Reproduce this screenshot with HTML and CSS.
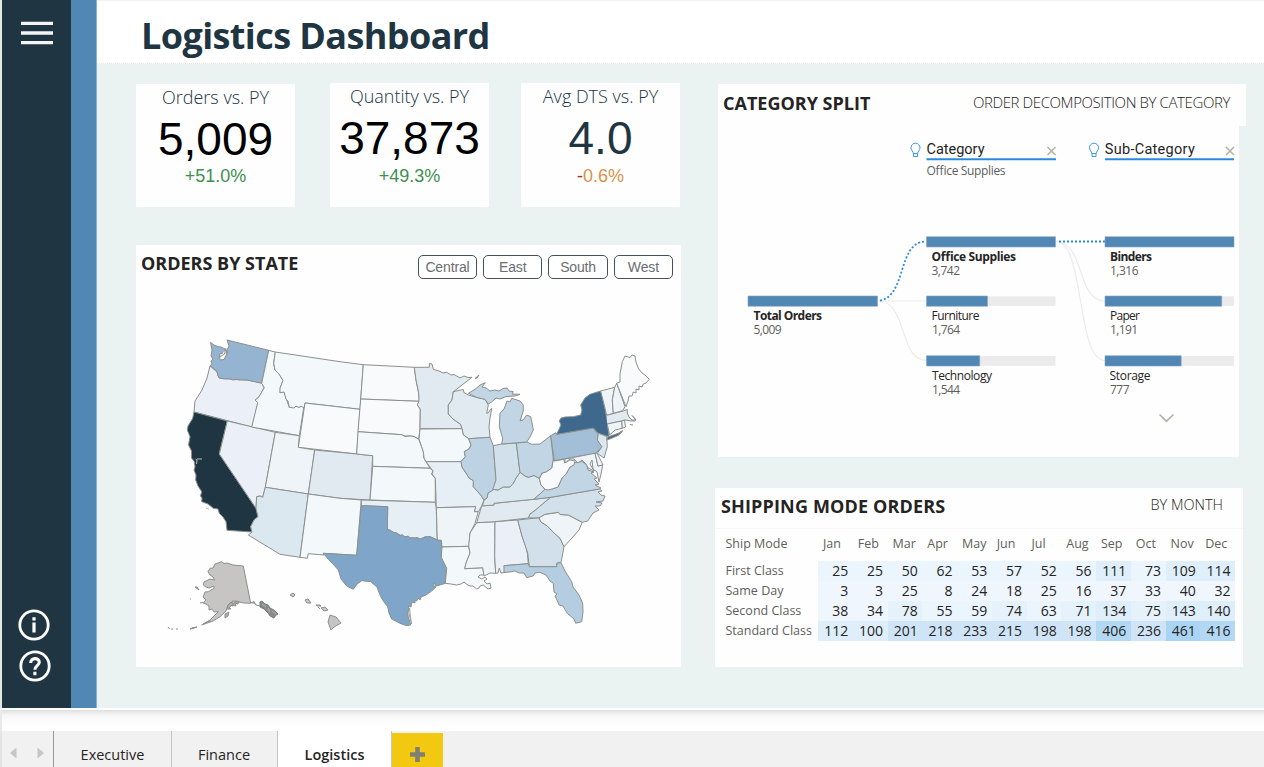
FILE: index.html
```html
<!DOCTYPE html>
<html lang="en">
<head>
<meta charset="utf-8">
<title>Logistics Dashboard</title>
<link rel="stylesheet" href="styles.css">
</head>
<body>
<div class="report">
  <nav class="rail">
    <svg class="menu" width="34" height="28" viewBox="0 0 34 28"><path d="M1 4.400h32M1 14h32M1 23.600h32" stroke="#f4f5f5" stroke-width="3.300"/></svg>
    <div class="rail-bottom">
      <svg class="info" width="34" height="34" viewBox="0 0 34 34"><circle cx="17" cy="17" r="14.200" fill="none" stroke="#fff" stroke-width="2.800"/><path d="M17 9.200v3.300M17 14.500v10" stroke="#fff" stroke-width="3.200"/></svg>
      <svg class="help" width="34" height="34" viewBox="0 0 34 34"><circle cx="17" cy="17" r="14.200" fill="none" stroke="#fff" stroke-width="2.800"/><path d="M12.700 14c0-5.800 8.600-5.600 8.600-.7 0 3.200-4.400 3.600-4.400 7.400M16.900 22.800v3.500" fill="none" stroke="#fff" stroke-width="3.100"/></svg>
    </div>
  </nav>
  <div class="stripe"></div>
  <main class="main">
    <header class="top"><h1>Logistics Dashboard</h1></header>
    <div class="content">
      <section class="left">
        <div class="kpis">
          <div class="kpi orders"><div class="kpi-name">Orders vs. PY</div><div class="kpi-value">5,009</div><div class="kpi-delta">+51.0%</div></div>
          <div class="kpi quantity"><div class="kpi-name">Quantity vs. PY</div><div class="kpi-value">37,873</div><div class="kpi-delta">+49.3%</div></div>
          <div class="kpi dts"><div class="kpi-name">Avg DTS vs. PY</div><div class="kpi-value">4.0</div><div class="kpi-delta"><span>-</span>0.6%</div></div>
        </div>
        <div class="panel map-panel">
          <div class="map-head">
            <h2>ORDERS BY STATE</h2>
            <div class="regions"><button>Central</button><button>East</button><button>South</button><button>West</button></div>
          </div>
          <svg class="map" width="545" height="372" viewBox="136 295 545 372">
            <g stroke="#8b908d" stroke-width="1" stroke-linejoin="round">
              <path fill="#ebeff8" d="M210 366L217 372L219 378L230 379L247 380L262 383L264 388L259 397L255 400L258 403L252 427L194 412L195 401L202 390L207 378Z"/>
              <path fill="#94b4d1" d="M227 340L268.700 350.300L261.700 383.300L256 382L247 380L240 380L236 379.500L233 380L230 378.700L224 379L219.300 377.700L218 376L217 371.700L214 369L212 367L210 365.700L212 364L211 361L213 359L211 356L212 350L210.500 342.300L214 345L218.300 346.700L221 347L225 349L224 353L222.700 354L219.300 355L220 360L224 359.500L225.700 356L227.500 353L227 350L229 346Z"/>
              <path fill="#fff" d="M226 348L224.500 354L220 357L219.500 354L223 353M224 351L227 350L226 354"/>
              <path fill="#203542" d="M194 412L227.300 421L219.300 454L223.300 460L256 508.300L258 516.700L254 520L250.700 526.700L252 532L227 530.300L226 521.700L223 517L219.300 513.300L218 509L213.300 508.300L208 504L201.700 501.700L202 498L200.500 496L201.700 491.700L198 486L195.700 480L196 475L194 470L195 466.700L194 461L191.500 458L191.500 451L188.500 445L190 436.700L187.300 430L188 426L192.700 418.300Z"/>
              <path fill="none" stroke="#b9c1c4" d="M195.500 459L197 460L196.500 464M197 459H202M206 508L209 509"/>
              <path fill="#ebeff8" d="M227.300 421L275.300 432.300L265.300 487.300L262.700 497.300L260 496L256.700 496.700L256 508.300L219.300 454Z"/>
              <path fill="#f3f8fb" d="M268.700 350.300L275.300 352L273.700 363.300L275 370L279 374L283 380.500L280.500 387L280 392.700L284 391.500L286 398L289.300 407.300L294 406L299 407L304 406L299.300 435.700L251.700 427L257.700 402.700L255.300 400.300L259 396.700L264.300 387.700L261.700 383.300Z"/>
              <path fill="#f3f8fb" d="M275.300 352L340 361.700L363.300 364.700L360 409.300L305 403L304 408L301 406L299 407.500L296 406L294 408L289.300 407.300L288 401L286 399L284 392L280 392.700L280 388L283 380.500L279 374L275 370L273.700 363.300Z"/>
              <path fill="#f8fafc" d="M305 403L360 409.300L356.700 454L298.300 447.300Z"/>
              <path fill="#eff4f8" d="M275.300 432.300L299.300 435.700L298.300 447.300L314.700 450L308.300 494L265.300 487.300Z"/>
              <path fill="#e0eaf0" d="M314.700 450L357 454L372.700 455.700L370 500L340 498.300L308.300 494Z"/>
              <path fill="#dce8f0" d="M265.300 487.300L308.300 494L300 557.300L280 554.300L248.300 535L252 532L250.700 526.700L254 520L258 516.700L256 508.300L256.700 496.700L260 496L262.700 497.300Z"/>
              <path fill="#f3f8fb" d="M308.300 494L340 498.300L361.300 500L356.700 555.300L323.300 553.300L324 555L308.300 553.700L307.300 558.300L300 557.300Z"/>
              <path fill="#f8fafc" d="M363.300 364.700L414.300 367.300L416 380L418.700 393.300L419.300 401.300L360.700 399Z"/>
              <path fill="#f8fafc" d="M360.700 399L419.300 401.300L417.300 405L420.300 409L420 429L418.700 439.300L414 436.500L410 436L405 436L401.700 434.700L358 431.700Z"/>
              <path fill="#f3f8fb" d="M358 431.700L401.700 434.700L405 436.500L410 436L414 436.500L418.700 439.300L421 445L423.300 451.700L424 458L426 461.700L430 468.300L372.700 466.300V455.700L356.700 454Z"/>
              <path fill="#f3f8fb" d="M372.700 466.300L430 468.300L433 471L431.500 474L435.300 478.300V502.300L370 500Z"/>
              <path fill="#e6eef6" d="M361.300 500L435.300 502.300L436.300 507.700L437.300 540L433 538L430 536.700L425 537L420 539L417 537.500L413 538L406.700 537.300L402 536L397 533.500L393 532L387.300 529.300L387.700 506.700L361.300 505.700Z"/>
              <path fill="#7fa6c8" d="M361.300 505.700L387.700 506.700L387.300 529.300L391 530.500L393 532.500L397 533L400 536L402 534.500L405 537L408 536L411 538.500L413 537.500L415 539L417 537.500L420 539.500L425 537L430 536.700L437.300 540L441.300 540.300L441.300 557.300L444 562L446.700 568.300L445.300 576L445.300 583.300L440 585L436 586L434 583L433 585L436 587L431.700 591L426 595L421 597L420 600L418 598L416.700 601L415 600L415 603L412 602L411 607L408.500 606L409 610L407.500 612L408.300 617L410.700 625L406 625.500L400 623.300L391.700 619L389 613L387.700 606.700L384 602L380.700 596.700L377 587L370.700 581.700L361.700 580.700L357 584L353.300 589.300L346.700 586L341 579L338.300 570L333 564L328.300 559.300L323.300 553.300L356.700 555.300Z"/>
              <path fill="#ddd" stroke-width=".7" d="M409.500 608L411.500 624L410 618L408.500 612Z"/>
              <path fill="#e0eaf0" d="M414.300 367.300H429.300V363.300L432 364L433.300 369.300L439 371L443 373L446.700 372.300L451 375L454 374.500L456.700 376L460 378L464 376L468 377.500L472 377.300L462 385L453.300 391.700L452 400L448.300 405V414L453 419L460.700 424.300L462 428.700H420L420.300 409L417.300 405L419 401L418.700 393L416 380Z"/>
              <path fill="#e0eaf0" d="M453.300 391.700L463.300 389.500L464 392.700L468.300 395L477 397.500L485 399.300L488.300 405L486.700 413.300L488 413L491.700 408.300L490 418L489 427L490 437.300L468.700 438.700L463.300 435L462 428.700L460.700 424.300L453 419L448.300 414V405L452 400Z"/>
              <path fill="#f3f8fb" d="M420 429L462 428.700L463.300 435L468.700 438.700L471 445L469 449L464.300 451.700L465.300 456.700L461 461.700H426L424 458L423.300 451.700L419 439Z"/>
              <path fill="#e6eef6" d="M426 461.700H461.500L462 467L466 473L469 478L473.500 480.700L473.300 486.700L480.700 495L484 500L481.700 506L478.300 511.700L474.300 511.700L475.700 506.700L436.300 507.700L435.300 478.300L432 474L433 471Z"/>
              <path fill="#eff4f8" d="M436.300 507.700L475.700 506.700L474.300 511.700L478.300 511.700L475 523.300L470 533.300L469 546.300L442 547L441.300 540.300L437.300 540Z"/>
              <path fill="#f3f8fb" d="M442 547L468.700 546.300L470 553.300L466 563.300L464.700 568.700L482.700 567.700L484 575L480 575L478 577L482 579L485 577L487 579L484 581L487 584L490 583L491 588L488 589L483.300 585L480 586L479 588L476.700 589L473 586L470 586L466.700 584.300L464 582L461 584L456.700 585L451 584L445.300 583.300L446.700 568.300L441.300 557.300Z"/>
              <path fill="#eff4f8" d="M476.700 522.700L495 521.700L494.700 556.700L495.700 573.300L490 573L484 576L482.700 567.700L464.700 568.700L466 563L470 553L468.700 546L470 533Z"/>
              <path fill="#ebeff8" d="M495 521.700L517.700 520L522 536L526 547L527.500 554L528.300 563.700L504 565.700L505.700 572.300L501 573L499.300 568L498 573L495.700 573.300L494.700 556.700Z"/>
              <path fill="#d1e0eb" d="M517.700 520L539 517.700L541 522L547.300 526L554 533L560 538.300L564 546.700L561 562.700L557 563L556.700 566.700H529.300L527.700 553L522 536Z"/>
              <path fill="#eff4f8" d="M539 517.700L545 514.300L558.300 512.300L560 514.500L568.300 515L582.300 522.300L579 530L572 538L564 546.700L560 538.300L554 533L547.300 526L541 522Z"/>
              <path fill="#d1e0eb" d="M528.300 518L530 514L536 509.500L540 506L546 501L550.700 497.300L599.300 489L602 491L598 492L601 495L605 496L603 501L596 502L602 503L600 506L595 506L599 510L593 513L587.700 521L582.300 522.300L568.300 515L560 514.500L558.300 512.300L545 514.300L539 517.700Z"/>
              <path fill="#e0eaf0" d="M476.700 522.700L481.700 505.700L494 505V503.300L533.700 499.300L550.700 497.300L546 501L540 506L536 509.500L530 514L528.300 518L495 521.700Z"/>
              <path fill="#dce8f0" d="M484 500L487 498L488 493L492.700 489.300L498 490L503.300 487L510 487L513.300 483.300L516 478L520 472.300L525 476L528.300 477.300L534 475.500L539.300 478.300L541 485L545 489.300L540 494L533.700 499.300L494 503.300V505L482.500 506Z"/>
              <path fill="#c2d5e4" d="M533.700 499.300L540 494L545 489.300L552 489L558 487L562 478L566 474L570 467L575 462.700L582 461.500L587 465L588 470L594 472L591 473L597 478L594 479L599 484L595 485L601 488L599.300 489L550.700 497.300Z"/>
              <path fill="#f8fafc" d="M539.300 478.300L542 473L546 472L551.700 468L553.500 458L554.300 461L564 459.300L564.500 463L570 460L575 461L574 465L570 467L566 474L562 478L558 487L552 489L548 490L545 489.300L541 485Z"/>
              <path fill="#bdd2e3" d="M468.700 438.700L490 437.300L493.300 445.700L495 467L496 480L493.300 490L488 493L487 498L484 500L480.700 495L473.300 486.700L473.300 480.700L469 478L466 473L462 467L461 461.700L465.300 456.700L464.300 451.700L469 449L471 445Z"/>
              <path fill="#d1e0eb" d="M493.300 445.700L501.700 444L516.300 443L520 472.300L516 478L513.300 483.300L510 487L503.300 487L498 490L492.700 489.300L496 480L495 467Z"/>
              <path fill="#c2d5e4" d="M516.300 443L526.700 442L531.700 444.300L540 444L550.700 435.700L553.300 459L551.700 468L546 472L542 473L539.300 478.300L534 475.500L528.300 477.300L525 476L520 472.300Z"/>
              <path fill="#c2d5e4" d="M501.700 444L526.700 442L530 437L533.300 430L532 423L530.700 416.700L526.700 415L523 420L520 421L523.300 411L523.300 405L520 401L511.700 398.300L510 402L507 401L504 409L500 413.300L499.300 426.700L502.700 438.300Z"/>
              <path fill="#c2d5e4" d="M468.300 393.300L475 389.300L480 385L485.300 382.700L482 387L486 388L490 391L495 390L499 391L503 388.500L507 388L509 391L513.300 391.700L512 394L520 394.300L515 396L506 396.500L500 399L496 398L491.700 402L488.300 404L485 399.300L477 397.500Z"/>
              <path fill="#c2d5e4" d="M475 378.500L479 375L477 378Z"/>
              <path fill="#a2bfd7" d="M550.700 435.700L556 432.700L556.700 434.300L593.300 428L596 432L598.300 433.300L597.300 440L602 446.700L598 451L595 453.300L554.300 460.700Z"/>
              <path fill="#3f698c" d="M556.700 434.300L561 425L559.300 421L561 418L565 417L573.300 416.700L580.700 415L582 410L580.700 405L585 398L590 394.300L600.700 391L603 400L605 408.300L607.300 421.700L609 436.700L598.300 433.300L593.300 428Z"/>
              <path fill="#dce8f0" d="M598.300 433.300L606.700 436.500L607.300 446.700L604 458L597.300 453.300L602 446.700L597.300 440Z"/>
              <path fill="#eff4f8" d="M565 459L595 453.300L598 466L602.700 465L601 474L599 482L597 472L593 469L592 460L590 464L594 471L588 468L586 464L582 460L578 463L574 459L570 459L565 463Z"/>
              <path fill="#eff4f8" d="M595 453.300L597 453L603 465L598 466Z"/>
              <path fill="#eff4f8" d="M600.700 391L614.700 387.300L612.300 400L613.300 413.300L606.700 415.300L605 408.300Z"/>
              <path fill="#eff4f8" d="M614.700 387.300L616.700 383.300L625 406.700L622.700 410.700L613.300 413.300L612.300 400Z"/>
              <path fill="#f8fafc" d="M616.700 383.300L620 382L620 374L622.300 361.700L625 356L630 357.500L632 355L635 356L636 362L638.300 368.300L642 373L645 375L649.300 379.300L646 383L643.300 384L642 387L639 386L639 390L636 389L636 393L633.300 392L632 396L629 396L628 401L626 406.700Z"/>
              <path fill="#e0eaf0" d="M606.700 415.300L623.300 411L627.300 409.500V413L629 417L632 420L636 420L632 415.500L635 418.500V421L631 421L625 420L621.700 421L607.300 424"/>
              <path fill="#eff4f8" d="M607.300 424L621.700 421L622.300 428.300L615 430L609.500 435Z"/>
              <path fill="#eff4f8" d="M621.700 421L624.500 420L625.500 427L622.300 428.300Z"/>
              <path fill="#3f698c" d="M606.700 440L608 437L615 434.500L622.500 431.500L618 435.500L611 438.500Z"/>
              <path fill="none" d="M630 424.500L633 425M620 432L623 430.500"/>
              <path fill="#b5cde0" d="M504 565.700L528.300 563.700L529.300 566.700H556.700L557 563L561 562.700L565 571L571.700 581.700L573 587L579 595L582.700 603.300L583 612L581.700 621.700L575.700 623.300L574 619L567.300 613.300L563 606L559 605L557 600L555 596L557 594L554 592L553.300 583.300L550 581L546 575L540 572.300L535 573L533 576L526.700 577.700L524 573L519 573L515 571L510 572L504 572.300Z"/>
              <path fill="#c6c5c4" d="M210 568.300L213 568L215 564L221.700 561.700L224 563.500L227 563L233 565L243.300 566L250.700 603.300L244 603L238.300 601.700L232 601L233 606L228 605L226 611L220 616.700L213 621L201.700 625L210 620L218.300 611.700L214 612L212 609L209 610L209 606L206 604L203 603L206 600L203 597L205 592L208.300 591.700L214 588.300V586L209 588L206 587L203.300 585L204 582L210 579L214.500 580L213 577L210 575L208 571.700Z"/>
              <path fill="#888c8b" stroke="#717775" stroke-width=".9" d="M260 602L262 601L265 604L268 605L270 608L274 610L278 614L276 615L274 618L270 616L268 613L264 609L260 607Z"/>
              <path fill="none" stroke="#b4b5b3" d="M262 604L266 607M268 608L270 612M272 611L276 614"/>
              <path fill="#aaa" d="M228 605L231 602L233 604L235 601L239 601.500L238 604L235 603L236 606L232 605L229 608L231 609L227 609ZM225 614L229 612L228 616L225 618ZM251 603L254 601.500L256 605L260 606M190 629L193 627.500L197 627L193 628.500ZM203 624L207 622L211 621M195 587L199 590L197 587ZM168 627L169.500 629M171 629H173M176 629H178M200 603L203 602.500M190 599L191 599"/>
              <path fill="#c6c5c4" d="M290 595L293 593L295 595L293 597ZM305 600L308 599L311 603L307 603ZM316 605L320 605L321 606L317 606ZM321 608L325 607L328 610L324 611ZM330 615L336 617L341 623L334 627L331 630L328 622ZM318 607L320 609"/>
            </g>
          </svg>
        </div>
      </section>
      <section class="right">
        <div class="split">
          <div class="split-head"><h2>CATEGORY SPLIT</h2><p>ORDER DECOMPOSITION BY CATEGORY</p></div>
          <svg class="tree" width="521" height="331" viewBox="718 126 521 331">
            <g fill="none" stroke="#ebebeb" stroke-width="1.200">
              <path d="M878 301H926M878 301C908 301 898 360.500 927 360.500M1056 241.500C1085 241.500 1076 301 1105 301M1056 241.500C1085 241.500 1076 360.500 1105 360.500"/>
              <path class="active-link" d="M880 300.500C907 296 897 241.500 926 241.500M1059 241.500H1105"/>
            </g>
            <path fill="#ebebeb" d="M926.500 296.300h129v9.700h-129zM926.500 356h129v9.700h-129zM1105 296.300h129v9.700h-129zM1105 356h129v9.700h-129z"/>
            <path fill="#5187b5" stroke="#86a5bf" stroke-width=".6" d="M748 296h129.500v10.300H748zM926.500 236.700h129v10.300h-129zM926.500 296h61v10.300h-61zM926.500 355.700h53.200V366h-53.200zM1105 236.700h129v10.300h-129zM1105 296h116.700v10.300H1105zM1105 355.700h76.200V366H1105z"/>
            <path stroke="#2a8ae0" stroke-width="2" d="M926.500 159.300h129.500M1105 159.300h129"/>
            <g fill="none" stroke="#3c96e6">
              <path id="bulb" d="M913.300 153.500c0-2-2.300-3-2.300-5.800a4.500 4.500 0 0 1 9 0c0 2.800-2.300 3.800-2.300 5.800zM913.500 153.500v3h4v-3"/>
              <use href="#bulb" x="178.500"/>
            </g>
            <path fill="none" stroke="#b0b3a0" stroke-width="1.500" d="M1047.500 147l8 8M1055.500 147l-8 8M1226 147l8 8M1234 147l-8 8"/>
            <path fill="none" stroke="#b3b6ab" stroke-width="1.700" d="M1159.500 414.500l7 6.700 7-6.700"/>
            <g class="level"><text x="926.500" y="154.300" textLength="58">Category</text><text x="1104.800" y="154.300" textLength="90">Sub-Category</text></g>
            <g class="num"><text x="926.500" y="175" textLength="79">Office Supplies</text>
              <text x="753.500" y="334" textLength="28">5,009</text><text x="931.500" y="275" textLength="28.500">3,742</text><text x="932" y="334" textLength="28">1,764</text><text x="932" y="394" textLength="28">1,544</text><text x="1110" y="275" textLength="28.500">1,316</text><text x="1110" y="334" textLength="28">1,191</text><text x="1110" y="394" textLength="19.500">777</text></g>
            <g class="node"><text x="931.500" y="320" textLength="48">Furniture</text><text x="932" y="380.300" textLength="60">Technology</text><text x="1110" y="320" textLength="30">Paper</text><text x="1109.500" y="380.300" textLength="41">Storage</text></g>
            <g class="node strong"><text x="753.500" y="320" textLength="68.500">Total Orders</text><text x="931.500" y="261" textLength="84.500">Office Supplies</text><text x="1110" y="261" textLength="42">Binders</text></g>
          </svg>
        </div>
        <div class="panel shipping">
          <div class="ship-head"><h2>SHIPPING MODE ORDERS</h2><p>BY MONTH</p></div>
          <table>
            <thead><tr><th>Ship Mode</th><th>Jan</th><th>Feb</th><th>Mar</th><th>Apr</th><th>May</th><th>Jun</th><th>Jul</th><th>Aug</th><th>Sep</th><th>Oct</th><th>Nov</th><th>Dec</th></tr></thead>
            <tbody>
              <tr><th>First Class</th><td class="b">25</td><td class="b">25</td><td class="b">50</td><td class="b">62</td><td class="b">53</td><td class="b">57</td><td class="b">52</td><td class="b">56</td><td class="d">111</td><td class="b">73</td><td class="d">109</td><td class="d">114</td></tr>
              <tr><th>Same Day</th><td>3</td><td>3</td><td>25</td><td>8</td><td>24</td><td>18</td><td>25</td><td>16</td><td>37</td><td>33</td><td>40</td><td>32</td></tr>
              <tr><th>Second Class</th><td>38</td><td>34</td><td class="c">78</td><td class="b">55</td><td class="b">59</td><td class="c">74</td><td class="b">63</td><td class="c">71</td><td class="d">134</td><td class="c">75</td><td class="d">143</td><td class="d">140</td></tr>
              <tr><th>Standard Class</th><td class="d">112</td><td class="d">100</td><td class="e">201</td><td class="e">218</td><td class="e">233</td><td class="e">215</td><td class="e">198</td><td class="e">198</td><td class="f">406</td><td class="e">236</td><td class="g">461</td><td class="f">416</td></tr>
            </tbody>
          </table>
        </div>
      </section>
    </div>
  </main>
</div>
<div class="page-edge"></div>
<footer class="tabs">
  <div class="arrows"><svg width="32" height="12" viewBox="0 0 32 12"><path fill="#c6c6c6" d="M5.500 .5v11L-1 6zM26.500 .5v11L33 6z"/></svg></div>
  <div class="tab executive">Executive</div><div class="tab finance">Finance</div><div class="tab current">Logistics</div>
  <div class="add"><svg width="15" height="15" viewBox="0 0 15 15"><path d="M7.500 0v15M0 7.500h15" stroke="#7f8073" stroke-width="4.600"/></svg></div>
</footer>
</body>
</html>
```
FILE: styles.css
```css
* { box-sizing: border-box; }
body { margin: 0; width: 1264px; height: 767px; overflow: hidden; background: #fff; font-family: "Open Sans", "Noto Sans", sans-serif; color: #252423; }
h1, h2, p { margin: 0; white-space: nowrap; }
.report { display: flex; height: 708px; border-left: 2px solid #e3e5e6; }
.rail { width: 69px; background: #203542; display: flex; flex-direction: column; justify-content: space-between; padding: 19px 0 25px 18px; }
.menu { display: block; }
.rail-bottom { display: flex; flex-direction: column; gap: 7px; }
.info { margin-left: -3px; }
.help { margin-left: -2px; }
.stripe { width: 26px; background: #5187b5; border-right: 1px solid #8fb0cd; }
.main { flex: 1; background: #ebf2f2; }
.top { height: 64px; background: #fff; padding: 9px 0 0 44px; border-bottom: 1px dotted #e3e8e8; border-top: 1px solid #f3f3f3; }
h1 { font-size: 36px; line-height: 52px; font-weight: 700; letter-spacing: -.6px; color: #203542; }
.content { display: flex; padding: 19px 0 0 39px; }
.left { width: 545px; }
.kpis { display: flex; align-items: flex-start; height: 162px; }
.kpi { width: 159px; height: 124px; background: #fefefe; text-align: center; }
.orders { margin-top: 1px; height: 123px; }
.quantity { margin-left: 35px; }
.dts { margin-left: 32px; }
.kpi-name { font-size: 18px; font-weight: 300; line-height: 27px; color: #203542; }
.kpi-value { font: 46px/52px "Liberation Sans", sans-serif; color: #000; margin-top: 2px; }
.kpi-delta { font: 18px/24px "Liberation Sans", sans-serif; color: #3f8f50; }
.orders .kpi-name { line-height: 26px; }
.orders .kpi-value { margin-top: 3px; }
.orders .kpi-delta { margin-top: -1px; }
.dts .kpi-value { color: #203542; }
.dts .kpi-delta { color: #d99248; }
.dts .kpi-delta span { color: #a62b33; }
.panel { background: #fefefe; }
h2 { font-size: 18px; line-height: 24px; font-weight: 700; }
.map-panel { height: 422px; }
.map-head { display: flex; justify-content: space-between; height: 50px; padding: 6px 8px 0 5px; }
.regions { display: flex; gap: 6px; padding-top: 4px; }
.regions button { width: 59.300px; height: 24px; border: 1px solid #465059; border-radius: 5px; background: #fff; padding: 0; font: 14px/20px "Liberation Sans", sans-serif; letter-spacing: -.15px; color: #6a6e70; }
.map { display: block; }
.right { margin-left: 34px; width: 531px; }
.split { margin: 1px 0 0 3px; }
.split-head { display: flex; justify-content: space-between; width: 528px; height: 42px; padding: 7px 16px 0 5px; background: #fefefe; }
.split-head p { font-size: 15px; line-height: 23px; font-weight: 300; letter-spacing: -.4px; }
.tree { display: block; background: #fefefe; }
.tree text { white-space: pre; }
.active-link { stroke: #2a8ae0; stroke-width: 1.800; stroke-dasharray: 2 2; }
.level { font: 14.500px Roboto, sans-serif; fill: #252423; }
.num { font-size: 12px; fill: #605e5c; }
.node { font-size: 12px; fill: #252423; }
.strong { font-weight: 700; }
.shipping { margin-top: 31px; width: 528px; height: 179px; }
.ship-head { display: flex; justify-content: space-between; height: 41px; padding: 6px 20px 0 5px; border-bottom: 1px solid #f7f7f7; }
.ship-head h2 { letter-spacing: .15px; padding-left: 1px; }
.ship-head p { font-size: 14.500px; line-height: 22px; font-weight: 300; }
table { border-collapse: collapse; table-layout: fixed; width: 520px; }
th, td { padding: 0; font-weight: 400; white-space: nowrap; }
th { text-align: left; font-size: 12.500px; color: #605e5c; }
thead th { height: 32px; width: 34.750px; padding: 1px 0 5px 5px; }
thead th:first-child { width: 103px; padding-left: 10.500px; }
tbody th { padding-left: 10.500px; }
tbody tr { height: 20px; }
tbody th { line-height: 18px; padding-bottom: 1px; }
td { height: 20px; line-height: 20px; text-align: right; padding-right: 4.500px; font-size: 14px; background: #eff6fe; color: #252423; }
.b { background: #eaf5fd; }
.c { background: #e5f2fc; }
.d { background: #deeefa; }
.e { background: #cfe5f7; }
.f { background: #b3d8f3; }
.g { background: #a9d4f4; }
.page-edge { height: 23px; border-left: 2px solid #e9e9e9; border-top: 2px solid #fff; background: linear-gradient(#dedfdf, #f6f6f6 5px, #fdfdfd 12px, #fff); }
.tabs { display: flex; height: 36px; border-left: 2px solid #e3e3e3; background: #f1f1f1; font-size: 14.500px; line-height: 47px; color: #252423; text-align: center; }
.arrows { width: 52px; border-right: 1px solid #999; padding: 16px 0 0 9px; text-align: left; line-height: 0; }
.arrows svg { overflow: visible; }
.tab { border-right: 1px solid #c4c4c4; height: 36px; }
.executive { width: 118px; }
.finance { width: 106px; padding-right: 1px; }
.current { width: 114px; background: #fff; font-weight: 600; }
.add { width: 51px; margin-top: 2px; background: #f2c811; padding-top: 14px; line-height: 0; }
```
